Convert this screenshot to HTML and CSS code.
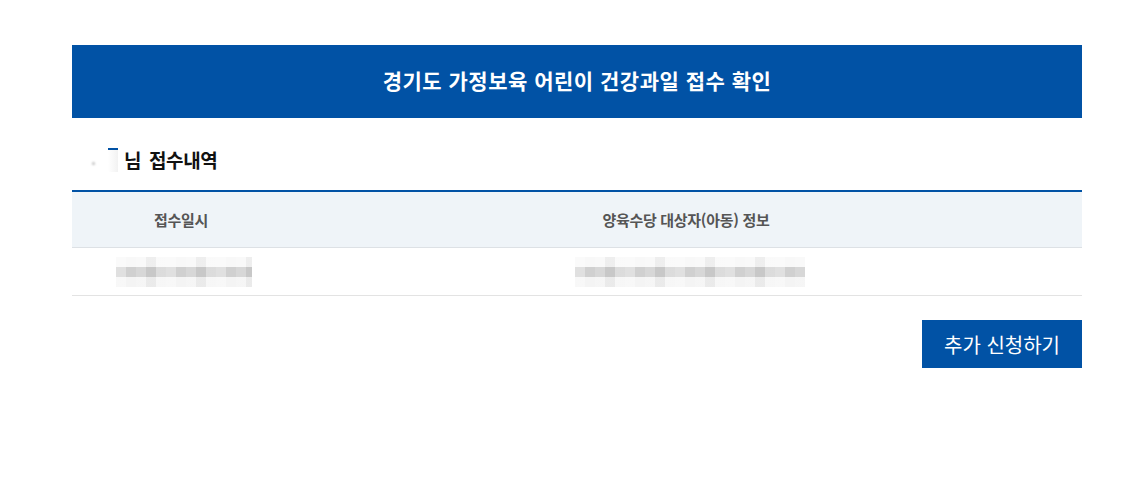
FILE: index.html
```html
<!DOCTYPE html>
<html lang="ko">
<head>
    <meta charset="UTF-8">
    <meta name="viewport" content="width=device-width, initial-scale=1.0">
    <title>접수 확인</title>
    <link rel="stylesheet" href="styles.css">
</head>
<body>
    <div class="wrap">
        <h1 class="title">경기도 가정보육 어린이 건강과일 접수 확인</h1>
        <h2 class="sub">
            <span class="mask"><span class="mask-dot"></span><span class="mask-edge"></span></span>님 접수내역
        </h2>
        <table class="list">
            <colgroup>
                <col class="col-date">
                <col>
            </colgroup>
            <thead>
                <tr>
                    <th>접수일시</th>
                    <th>양육수당 대상자(아동) 정보</th>
                </tr>
            </thead>
            <tbody>
                <tr>
                    <td><span class="mosaic mosaic-date"></span></td>
                    <td><span class="mosaic mosaic-info"></span></td>
                </tr>
            </tbody>
        </table>
        <div class="actions">
            <button type="button" class="btn">추가 신청하기</button>
        </div>
    </div>
</body>
</html>
```

FILE: styles.css
```css
body {
    margin: 0;
    padding: 0;
    background: #fff;
    font-family: "Noto Sans CJK KR", "Noto Sans", sans-serif;
    color: #111;
}
.wrap {
    width: 1010px;
    margin: 45px 0 0 72px;
}
.title {
    margin: 0;
    height: 73px;
    line-height: 71px;
    background: #0152a5;
    color: #fff;
    font-size: 21px;
    font-weight: 700;
    letter-spacing: 0.5px;
    text-align: center;
}
.sub {
    margin: 0;
    padding: 32px 0 0 14px;
    height: 52px;
    box-sizing: border-box;
    font-size: 19px;
    font-weight: 700;
    line-height: 30px;
    letter-spacing: -0.4px;
    word-spacing: 3px;
    color: #111;
    display: flex;
    align-items: center;
}
.mask {
    position: relative;
    display: inline-block;
    width: 38px;
    height: 24px;
}
.mask-dot {
    position: absolute;
    left: 6px;
    top: 14px;
    width: 3px;
    height: 3px;
    background: #bbb;
    border-radius: 50%;
    filter: blur(1px);
}
.mask-edge {
    position: absolute;
    left: 22px;
    top: 0;
    width: 10px;
    height: 24px;
    border-top: 2px solid #0152a5;
    background: linear-gradient(90deg, #fff, #f2f2f2);
    box-sizing: border-box;
}
.list {
    width: 100%;
    margin-top: 20px;
    border-collapse: collapse;
    border-top: 2px solid #0152a5;
}
.col-date {
    width: 218px;
}
.list th {
    height: 55px;
    background: #eff4f8;
    border-bottom: 1px solid #dde1e5;
    color: #555;
    font-size: 15px;
    font-weight: 700;
    letter-spacing: -0.3px;
    text-align: center;
    padding: 0;
}
.list td {
    height: 47px;
    border-bottom: 1px solid #e3e3e3;
    text-align: center;
    vertical-align: middle;
    padding: 0;
    font-size: 0;
}
.mosaic {
    display: inline-block;
    height: 30px;
    vertical-align: middle;
    background-image:
        repeating-linear-gradient(90deg, rgba(255, 255, 255, 0.35) 0 10px, rgba(255, 255, 255, 0) 10px 20px, rgba(255, 255, 255, 0.15) 20px 30px, rgba(0, 0, 0, 0.04) 30px 40px, rgba(255, 255, 255, 0.25) 40px 50px),
        linear-gradient(#f8f8f8 0 10px, #d0d0d0 10px 20px, #f4f4f4 20px);
}
.mosaic-date {
    width: 136px;
    margin-left: 6px;
}
.mosaic-info {
    width: 230px;
    margin-left: 8px;
}
.actions {
    display: flex;
    justify-content: flex-end;
    margin-top: 24px;
}
.btn {
    width: 160px;
    height: 48px;
    border: none;
    background: #0152a5;
    color: #fff;
    font-family: "Noto Sans CJK KR", "Noto Sans", sans-serif;
    font-size: 20px;
    cursor: pointer;
}
```
